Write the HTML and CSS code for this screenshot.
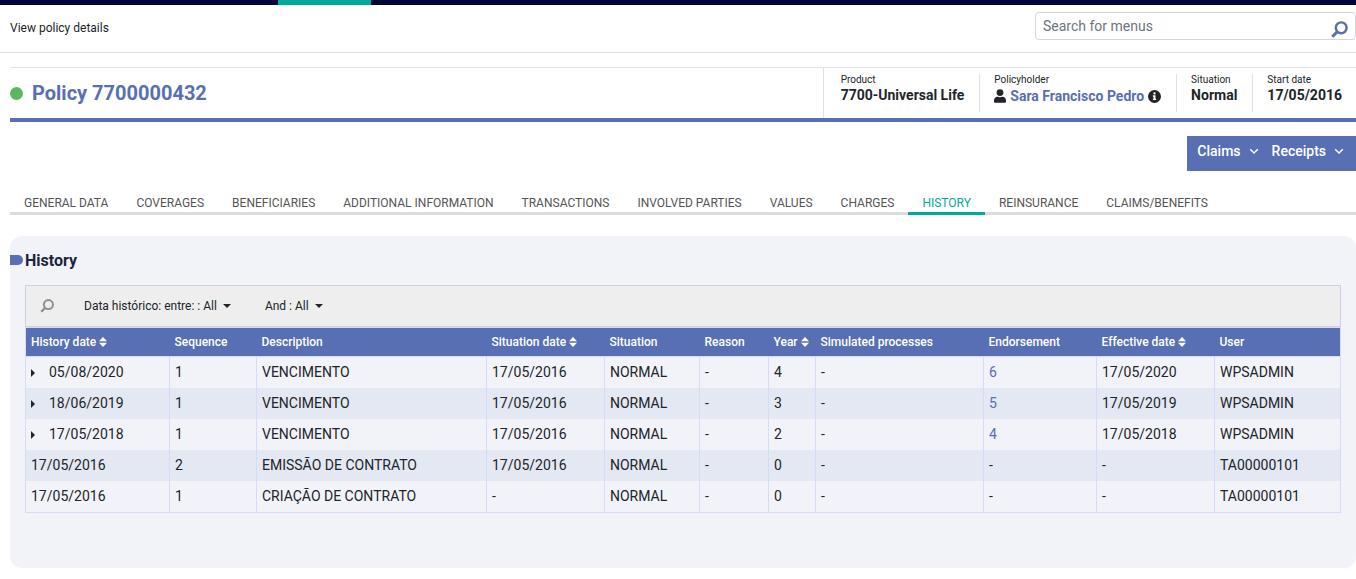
FILE: index.html
```html
<!DOCTYPE html>
<html lang="en">
<head>
<meta charset="utf-8">
<meta name="viewport" content="width=device-width, initial-scale=1">
<title>View policy details</title>
<link rel="stylesheet" href="styles.css">
</head>
<body>
<svg class="sprite" aria-hidden="true">
  <symbol id="search" viewBox="0 0 16 16"><circle cx="9.600" cy="6.400" r="5.100" fill="none" stroke="currentColor" stroke-width="2.300"/><path d="M5.800 10.200L1.200 14.800" stroke="currentColor" stroke-width="2.800" fill="none"/></symbol>
  <symbol id="search-thin" viewBox="0 0 16 16"><circle cx="9.600" cy="6.400" r="5.200" fill="none" stroke="currentColor" stroke-width="2.200"/><path d="M5.900 10.100L1.400 14.600" stroke="currentColor" stroke-width="2.600" fill="none"/></symbol>
  <symbol id="user" viewBox="0 0 448 512"><path fill="currentColor" d="M224 256a128 128 0 1 0 0-256 128 128 0 0 0 0 256zm90 32h-17a174 174 0 0 1-146 0h-17C60 288 0 348 0 422v42c0 27 21 48 48 48h352c27 0 48-21 48-48v-42c0-74-60-134-134-134z"/></symbol>
  <symbol id="info" viewBox="0 0 16 16"><circle cx="8" cy="8" r="8" fill="currentColor"/><path fill="#fff" d="M6 6.600h3.200v4.200H10v1.600H6v-1.600h.8V8.200H6z"/><circle cx="8" cy="4.200" r="1.400" fill="#fff"/></symbol>
  <symbol id="chevron" viewBox="0 0 10 10"><path d="M1.200 3.200L5 7l3.800-3.800" fill="none" stroke="currentColor" stroke-width="1.500"/></symbol>
  <symbol id="sort" viewBox="0 0 8 10"><path fill="currentColor" d="M4 0l4 4.300H0zM4 10L0 5.700h8z"/></symbol>
  <symbol id="caret" viewBox="0 0 8 4"><path fill="currentColor" d="M0 0h8L4 4z"/></symbol>
  <symbol id="caret-right" viewBox="0 0 4 8"><path fill="currentColor" d="M0 0l4 4-4 4z"/></symbol>
</svg>

<div class="topbar"><div class="topbar-active"></div></div>
<header class="header">
  <h1 class="page-title">View policy details</h1>
  <form class="search">
    <input class="search-input" type="text" placeholder="Search for menus" aria-label="Search for menus">
    <button class="search-button" type="button" aria-label="Search"><svg><use href="#search"/></svg></button>
  </form>
</header>

<main class="content">
  <section class="policy">
    <div class="policy-name"><span class="status"></span><h2 class="policy-title">Policy 7700000432</h2></div>
    <dl class="facts">
      <div class="fact"><dt>Product</dt><dd>7700-Universal Life</dd></div>
      <div class="fact"><dt>Policyholder</dt><dd class="holder"><svg class="icon-user"><use href="#user"/></svg><a href="#">Sara Francisco Pedro</a><svg class="icon-info"><use href="#info"/></svg></dd></div>
      <div class="fact"><dt>Situation</dt><dd>Normal</dd></div>
      <div class="fact"><dt>Start date</dt><dd>17/05/2016</dd></div>
    </dl>
  </section>

  <div class="actions">
    <button class="action" type="button">Claims<svg><use href="#chevron"/></svg></button>
    <button class="action" type="button">Receipts<svg><use href="#chevron"/></svg></button>
  </div>

  <nav class="tabs">
    <a class="tab" href="#">GENERAL DATA</a>
    <a class="tab" href="#">COVERAGES</a>
    <a class="tab" href="#">BENEFICIARIES</a>
    <a class="tab" href="#">ADDITIONAL INFORMATION</a>
    <a class="tab" href="#">TRANSACTIONS</a>
    <a class="tab" href="#">INVOLVED PARTIES</a>
    <a class="tab" href="#">VALUES</a>
    <a class="tab" href="#">CHARGES</a>
    <a class="tab tab-active" href="#" aria-current="page">HISTORY</a>
    <a class="tab" href="#">REINSURANCE</a>
    <a class="tab" href="#">CLAIMS/BENEFITS</a>
  </nav>

  <section class="panel">
    <h3 class="panel-title">History</h3>
    <div class="filters">
      <svg class="filter-search"><use href="#search-thin"/></svg>
      <button class="filter" type="button">Data histórico: entre: : All<svg><use href="#caret"/></svg></button>
      <button class="filter" type="button">And : All<svg><use href="#caret"/></svg></button>
    </div>
    <table class="history">
      <colgroup><col class="w-date"><col class="w-seq"><col class="w-desc"><col class="w-sitdate"><col class="w-sit"><col class="w-reason"><col class="w-year"><col class="w-sim"><col class="w-end"><col class="w-eff"><col></colgroup>
      <thead>
        <tr>
          <th>History date<svg><use href="#sort"/></svg></th><th>Sequence</th><th>Description</th><th>Situation date<svg><use href="#sort"/></svg></th><th>Situation</th><th>Reason</th><th>Year<svg><use href="#sort"/></svg></th><th>Simulated processes</th><th>Endorsement</th><th>Effective date<svg><use href="#sort"/></svg></th><th>User</th>
        </tr>
      </thead>
      <tbody>
        <tr><td><button class="expand" type="button" aria-label="Expand row"><svg><use href="#caret-right"/></svg></button>05/08/2020</td><td>1</td><td>VENCIMENTO</td><td>17/05/2016</td><td>NORMAL</td><td>-</td><td>4</td><td>-</td><td><a href="#">6</a></td><td>17/05/2020</td><td>WPSADMIN</td></tr>
        <tr><td><button class="expand" type="button" aria-label="Expand row"><svg><use href="#caret-right"/></svg></button>18/06/2019</td><td>1</td><td>VENCIMENTO</td><td>17/05/2016</td><td>NORMAL</td><td>-</td><td>3</td><td>-</td><td><a href="#">5</a></td><td>17/05/2019</td><td>WPSADMIN</td></tr>
        <tr><td><button class="expand" type="button" aria-label="Expand row"><svg><use href="#caret-right"/></svg></button>17/05/2018</td><td>1</td><td>VENCIMENTO</td><td>17/05/2016</td><td>NORMAL</td><td>-</td><td>2</td><td>-</td><td><a href="#">4</a></td><td>17/05/2018</td><td>WPSADMIN</td></tr>
        <tr><td>17/05/2016</td><td>2</td><td>EMISSÃO DE CONTRATO</td><td>17/05/2016</td><td>NORMAL</td><td>-</td><td>0</td><td>-</td><td>-</td><td>-</td><td>TA00000101</td></tr>
        <tr><td>17/05/2016</td><td>1</td><td>CRIAÇÃO DE CONTRATO</td><td>-</td><td>NORMAL</td><td>-</td><td>0</td><td>-</td><td>-</td><td>-</td><td>TA00000101</td></tr>
      </tbody>
    </table>
  </section>
</main>
</body>
</html>
```
FILE: styles.css
```css
:root {
  --blue: #586fb3;
  --teal: #00a99a;
  --ink: #212529;
  --line: #dee2e6;
  --grid: #d6dbfa;
}

* { box-sizing: border-box; }

body {
  margin: 0;
  background: #fff;
  color: var(--ink);
  font-family: Roboto, "Liberation Sans", sans-serif;
  font-size: 14px;
}

h1, h2, h3, dl, dd { margin: 0; }
a { color: var(--blue); text-decoration: none; }
button { padding: 0; border: 0; background: none; color: inherit; font: inherit; cursor: pointer; }
.sprite { display: none; }

.topbar { height: 5px; padding-left: 278px; background: #00053a; }
.topbar-active { width: 93px; height: 5px; background: var(--teal); }

.header {
  display: flex;
  justify-content: space-between;
  align-items: flex-start;
  height: 48px;
  padding: 7px 0 0 10px;
  border-bottom: 1px solid var(--line);
}
.page-title { padding-top: 8px; font-size: 12px; font-weight: 400; line-height: 16px; }
.search {
  display: flex;
  width: 321px;
  height: 28px;
  border: 1px solid #d3d6da;
  border-radius: 4px;
}
.search-input {
  flex: 1;
  min-width: 0;
  padding: 0 7px;
  border: 0;
  background: none;
  color: var(--ink);
  font: inherit;
}
.search-input::placeholder { color: #6c757d; opacity: 1; }
.search-button { display: flex; align-items: flex-end; padding: 0 7px 1px 0; color: var(--blue); }
.search-button svg { width: 17px; height: 17px; }

.content { padding: 14px 0 11px 10px; }

.policy {
  display: flex;
  justify-content: space-between;
  border-top: 1px solid #e2e4e8;
  border-bottom: 4px solid var(--blue);
}
.policy-name { display: flex; align-items: center; gap: 9px; }
.status { width: 13px; height: 13px; border-radius: 50%; background: #5cb85c; }
.policy-title { color: var(--blue); font-size: 20px; font-weight: 700; line-height: 24px; }
.facts { display: flex; padding: 6px 0 6px 3px; border-left: 1px solid var(--line); }
.fact { height: 38px; padding: 0 15px 0 14px; border-left: 1px solid var(--line); }
.fact:first-child { border-left: 0; }
.fact:last-child { padding-right: 14px; }
.fact dt { font-size: 10px; line-height: 12px; }
.fact dd { font-weight: 700; line-height: 18px; }
.fact .holder { display: flex; align-items: center; line-height: 20px; }
.icon-user { width: 12px; height: 14px; margin-right: 4px; }
.icon-info { width: 13px; height: 13px; margin-left: 4px; }

.actions {
  display: flex;
  gap: 13px;
  width: fit-content;
  height: 35px;
  margin: 14px 0 0 auto;
  padding: 0 12px 5px 10px;
  background: var(--blue);
}
.action { display: flex; align-items: center; gap: 8px; color: #fff; font-weight: 500; }
.action svg { width: 10px; height: 10px; }

.tabs { display: flex; margin-top: 20px; box-shadow: inset 0 -3px #dcdcdc; }
.tab {
  padding: 4px 14px 1px;
  border-bottom: 3px solid transparent;
  color: #555;
  font-size: 12px;
  line-height: 16px;
}
.tab-active { border-bottom-color: var(--teal); color: var(--teal); }

.panel {
  min-height: 332px;
  margin-top: 21px;
  padding: 15px 15px 55px;
  border-radius: 12px;
  background: #f2f3f9;
}
.panel-title {
  display: flex;
  align-items: center;
  gap: 2px;
  margin: 0 0 14px -15px;
  color: #1c2340;
  font-size: 16px;
  font-weight: 700;
  line-height: 20px;
}
.panel-title::before {
  width: 13px;
  height: 10px;
  margin-bottom: 2px;
  border-radius: 0 5px 5px 0;
  background: var(--blue);
  content: "";
}

.filters {
  display: flex;
  align-items: center;
  height: 42px;
  padding-left: 14px;
  border: 1px solid #cdd1d9;
  background: #eee;
  font-size: 12px;
}
.filter-search { width: 14px; height: 14px; margin-right: 30px; color: #8e8e8e; }
.filter { display: flex; align-items: center; gap: 6px; margin-right: 34px; }
.filter svg { width: 8px; height: 4px; }

.history {
  width: 100%;
  border-collapse: collapse;
  table-layout: fixed;
  border: 1px solid var(--grid);
}
.history th {
  height: 29px;
  padding: 0 5px;
  background: var(--blue);
  color: #fff;
  font-size: 12px;
  font-weight: 500;
  text-align: left;
  white-space: nowrap;
}
.history th svg { width: 8px; height: 10px; margin-left: 3px; vertical-align: -1px; }
.history td { height: 31px; padding: 0 5px; border-right: 1px solid var(--grid); white-space: nowrap; }
.history tbody { border-top: 1px solid var(--grid); }
.history tbody tr:nth-child(even) { background: #e4e8f3; }
.history tbody tr:last-child td { height: 32px; }
.expand { width: 18px; text-align: left; }
.expand svg { width: 4px; height: 8px; }

.w-date { width: 144px; }
.w-seq { width: 87px; }
.w-desc { width: 230px; }
.w-sitdate { width: 118px; }
.w-sit { width: 95px; }
.w-reason { width: 69px; }
.w-year { width: 47px; }
.w-sim { width: 168px; }
.w-end { width: 113px; }
.w-eff { width: 118px; }
```
